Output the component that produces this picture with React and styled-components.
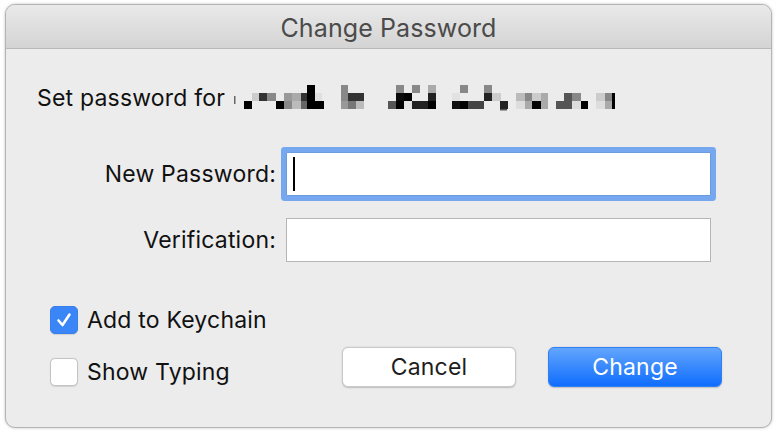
import React from 'react';
import styled, { createGlobalStyle } from 'styled-components';

const GlobalStyle = createGlobalStyle`
  html, body {
    margin: 0;
    padding: 0;
    background: #ffffff;
  }
  body {
    font-family: Inter, "Noto Sans", "Liberation Sans", sans-serif;
    -webkit-font-smoothing: antialiased;
  }
`;

const Page = styled.div`
  width: 778px;
  height: 434px;
  padding: 4px 6px 6px 5px;
  box-sizing: border-box;
`;

const Window = styled.div`
  height: 424px;
  display: flex;
  flex-direction: column;
  background: #ececec;
  border: 1px solid #b4b4b4;
  border-radius: 10px;
  box-shadow: 0 0 3px rgba(0, 0, 0, 0.25);
  overflow: hidden;
  box-sizing: border-box;
`;

const TitleBar = styled.div`
  height: 44px;
  flex-shrink: 0;
  display: flex;
  align-items: center;
  justify-content: center;
  padding-top: 2px;
  box-sizing: border-box;
  background: linear-gradient(#e9e9e9, #d4d4d4);
  border-bottom: 1px solid #b9b9b9;
  font-size: 25px;
  letter-spacing: 0.1px;
  color: #4b4b4b;
`;

const Body = styled.div`
  flex: 1;
  display: flex;
  flex-direction: column;
  padding: 35px 49px 0 31px;
  color: #111;
  font-size: 23px;
  letter-spacing: 0.2px;
`;

const Heading = styled.div`
  display: flex;
  align-items: center;
  height: 28px;
`;

const Mosaic = styled.svg`
  margin-left: 9px;
  flex-shrink: 0;
`;

const Form = styled.div`
  display: grid;
  grid-template-columns: 239px 425px;
  column-gap: 10px;
  row-gap: 22px;
  align-items: center;
  margin-top: 40px;
`;

const Label = styled.div`
  text-align: right;
`;

const Field = styled.div`
  height: 44px;
  display: flex;
  align-items: center;
  padding-left: 6px;
  box-sizing: border-box;
  background: #ffffff;
  border: 1px solid ${(p) => (p.$focused ? '#6d9be0' : '#b5b5b5')};
  box-shadow: ${(p) => (p.$focused ? '0 0 0 5px #76a8f0' : 'none')};
  border-radius: ${(p) => (p.$focused ? '1px' : '0')};
`;

const Caret = styled.span`
  width: 2px;
  height: 34px;
  background: #000;
`;

const Footer = styled.div`
  display: flex;
  align-items: flex-end;
  justify-content: space-between;
  margin-top: 44px;
`;

const Options = styled.div`
  display: flex;
  flex-direction: column;
  gap: 24px;
  margin-left: 13px;
`;

const Option = styled.label`
  display: flex;
  align-items: center;
  gap: 9px;
  height: 28px;
`;

const Box = styled.span`
  width: 28px;
  height: 28px;
  box-sizing: border-box;
  border-radius: 5px;
  display: flex;
  align-items: center;
  justify-content: center;
  background: ${(p) => (p.$checked ? '#3b86f7' : '#ffffff')};
  border: 1px solid ${(p) => (p.$checked ? '#3680f0' : '#c4c4c4')};
  box-shadow: 0 0.5px 1px rgba(0, 0, 0, 0.12);
`;

const Buttons = styled.div`
  display: flex;
  gap: 32px;
  margin-bottom: -1px;
`;

const Button = styled.button`
  width: 174px;
  height: 40px;
  border-radius: 6px;
  font-family: inherit;
  font-size: 23px;
  letter-spacing: 0.2px;
  cursor: pointer;
  border: 1px solid ${(p) => (p.$primary ? '#2f7ff5' : '#c9c9c9')};
  background: ${(p) => (p.$primary ? 'linear-gradient(#62a5fc, #0f6dfe)' : '#ffffff')};
  color: ${(p) => (p.$primary ? '#ffffff' : '#1d1d1d')};
  box-shadow: 0 0.5px 1.5px rgba(0, 0, 0, 0.2);
`;

const blocks = [
  [308, 0, 8, '#000'], [342, 0, 7, '#888'], [397, 0, 8, '#888'], [413, 0, 8, '#888'],
  [429, 0, 8, '#aaa'], [461, 0, 8, '#888'], [485, 0, 8, '#888'],
  [253, 1, 7, '#ccc'], [260, 1, 8, '#333'], [268, 1, 9, '#888'], [285, 1, 8, '#999'],
  [293, 1, 9, '#aaa'], [302, 1, 6, '#333'], [308, 1, 8, '#000'], [316, 1, 7, '#e0e0e0'],
  [342, 1, 7, '#888'], [349, 1, 8, '#333'], [357, 1, 8, '#333'], [397, 1, 8, '#0a0a0a'],
  [405, 1, 8, '#000'], [429, 1, 8, '#222'], [453, 1, 8, '#e2e2e2'], [485, 1, 8, '#222'],
  [493, 1, 9, '#ccc'], [517, 1, 9, '#bbb'], [526, 1, 7, '#888'], [533, 1, 9, '#ccc'],
  [542, 1, 7, '#aaa'], [565, 1, 8, '#555'], [573, 1, 9, '#888'], [597, 1, 9, '#ccc'],
  [606, 1, 7, '#888'], [613, 1, 3, '#000'],
  [245, 2, 8, '#000'], [277, 2, 8, '#000'], [285, 2, 8, '#888'], [293, 2, 9, '#bbb'],
  [302, 2, 6, '#666'], [308, 2, 8, '#000'], [316, 2, 9, '#000'], [342, 2, 7, '#999'],
  [349, 2, 8, '#777'], [357, 2, 8, '#bbb'], [389, 2, 8, '#555'], [397, 2, 8, '#000'],
  [405, 2, 8, '#e4e4e4'], [413, 2, 8, '#222'], [421, 2, 8, '#222'], [429, 2, 8, '#000'],
  [453, 2, 8, '#111'], [461, 2, 8, '#000'], [469, 2, 8, '#444'], [477, 2, 8, '#444'],
  [501, 2, 8, '#222'], [517, 2, 9, '#ddd'], [526, 2, 7, '#aaa'], [533, 2, 9, '#000'],
  [542, 2, 7, '#aaa'], [557, 2, 8, '#555'], [565, 2, 8, '#555'], [573, 2, 9, '#ddd'],
  [582, 2, 7, '#000'], [597, 2, 9, '#ddd'], [606, 2, 7, '#aaa'], [613, 2, 3, '#000'],
];

const RedactedName = () => (
  <Mosaic width="385" height="26" viewBox="0 0 385 26">
    <rect x="0" y="11" width="1.5" height="8" fill="#666" />
    {blocks.map(([x, row, w, c], i) => (
      <rect key={i} x={x - 235} y={row * 8} width={w} height="8" fill={c} />
    ))}
    <rect x="266" y="24" width="7" height="1.5" fill="#555" />
  </Mosaic>
);

const Check = () => (
  <svg width="18" height="18" viewBox="0 0 18 18">
    <path d="M3.5 9.5 L7.5 14 L14.5 3.5" fill="none" stroke="#fff" strokeWidth="2.6" strokeLinecap="round" strokeLinejoin="round" />
  </svg>
);

const App = () => {
  return (
    <Page>
      <GlobalStyle />
      <Window>
        <TitleBar>Change Password</TitleBar>
        <Body>
          <Heading>
            <span>Set password for</span>
            <RedactedName />
          </Heading>
          <Form>
            <Label>New Password:</Label>
            <Field $focused>
              <Caret />
            </Field>
            <Label>Verification:</Label>
            <Field />
          </Form>
          <Footer>
            <Options>
              <Option>
                <Box $checked>
                  <Check />
                </Box>
                Add to Keychain
              </Option>
              <Option>
                <Box />
                Show Typing
              </Option>
            </Options>
            <Buttons>
              <Button>Cancel</Button>
              <Button $primary>Change</Button>
            </Buttons>
          </Footer>
        </Body>
      </Window>
    </Page>
  );
};

export default App;
